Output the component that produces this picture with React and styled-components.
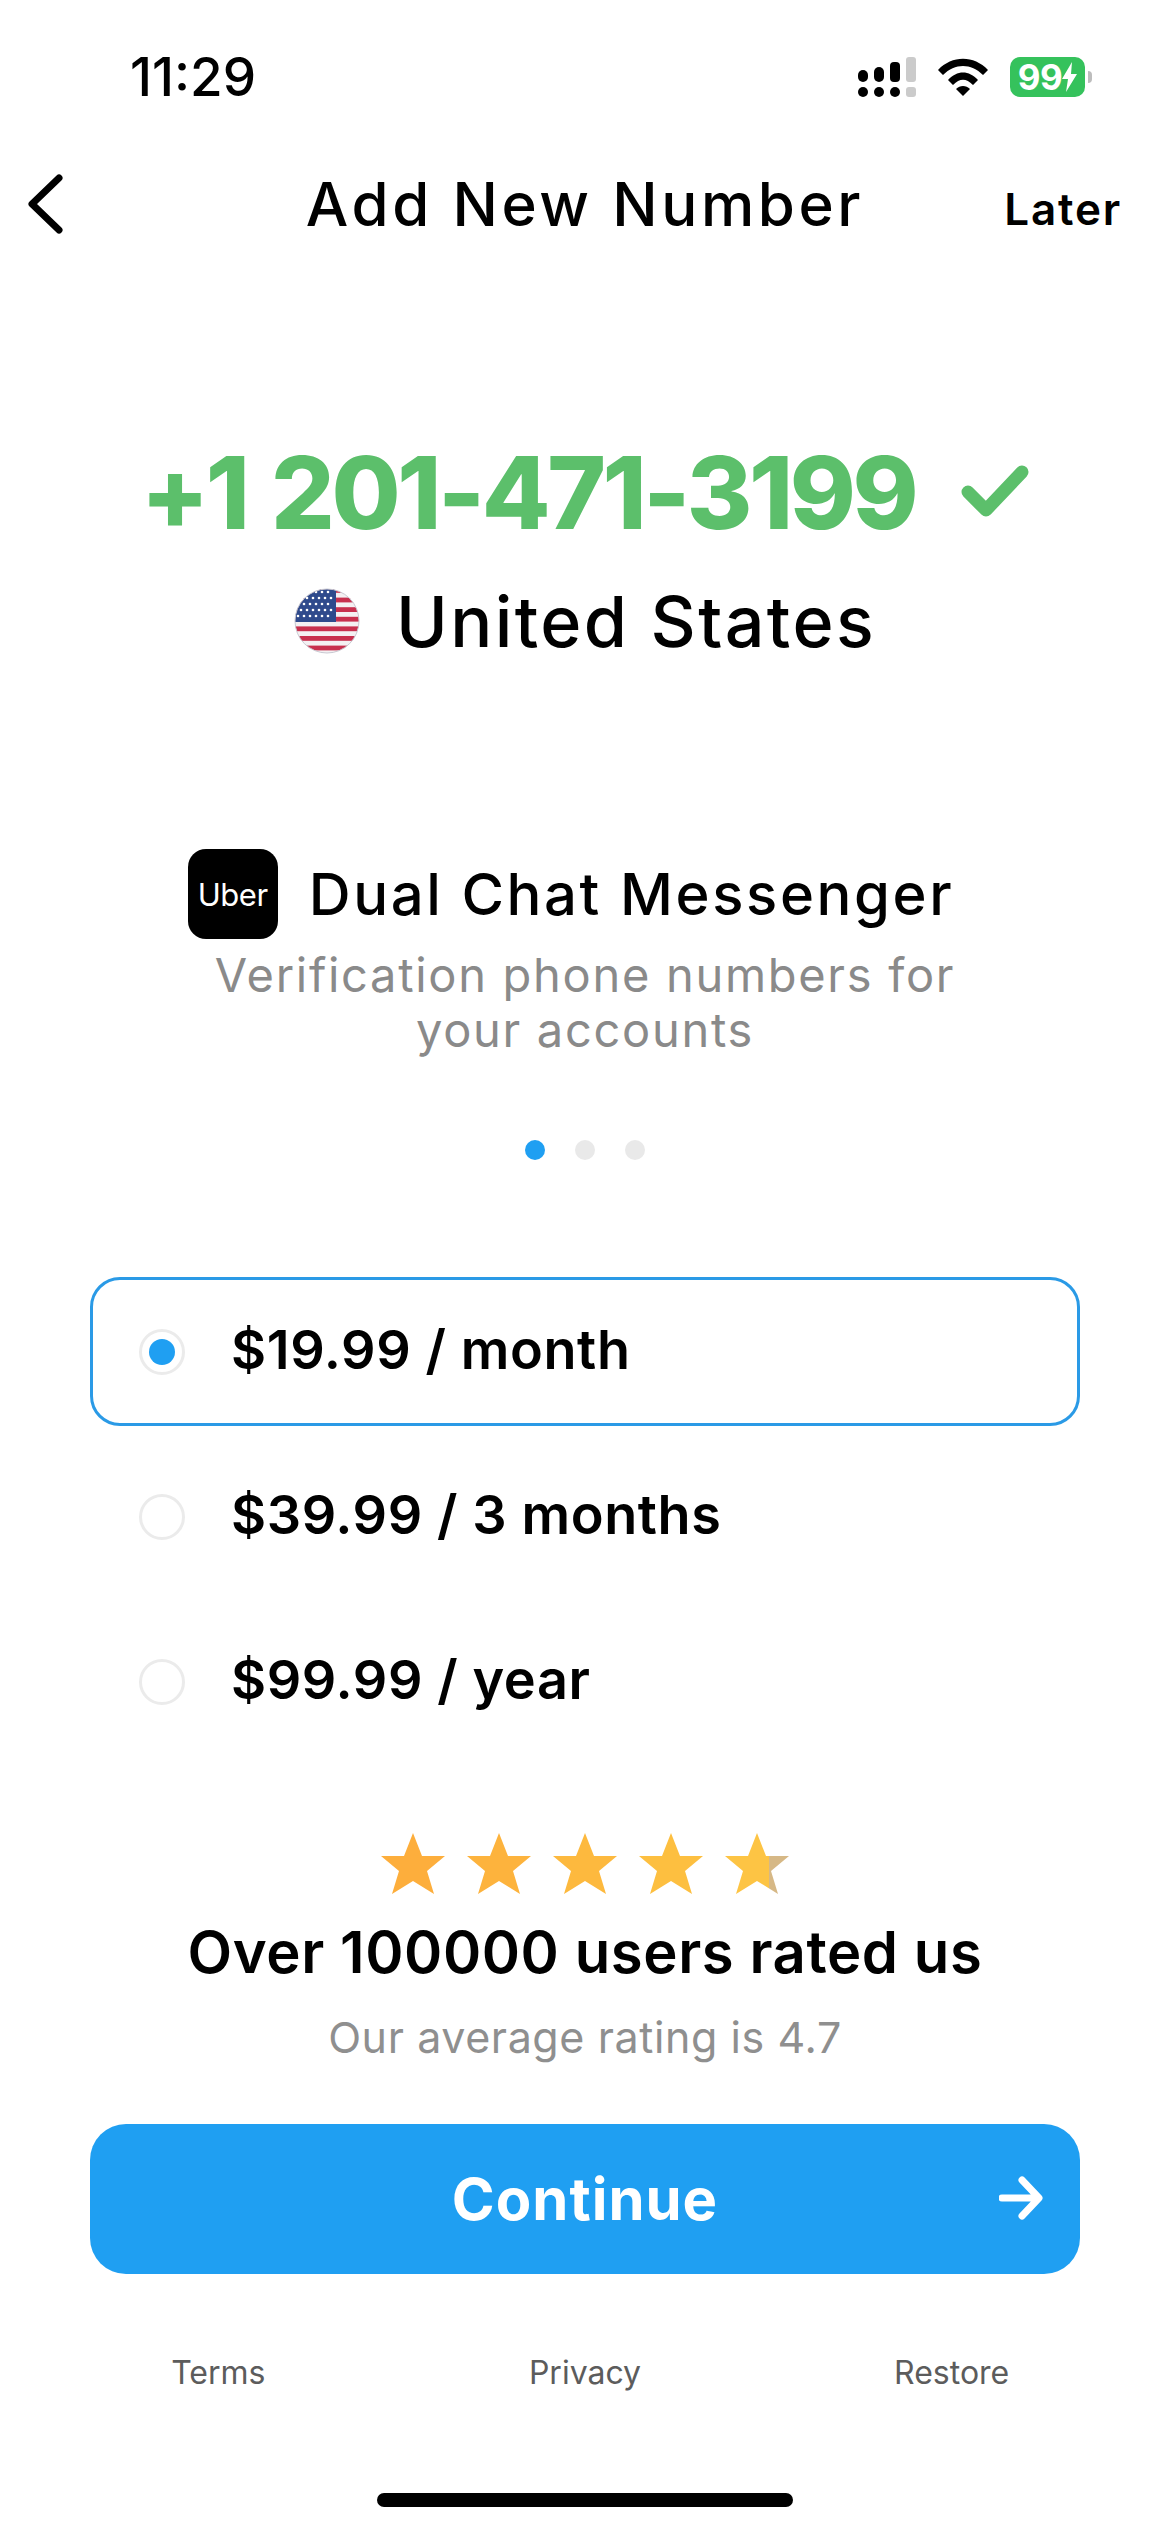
import React from 'react';
import styled, { createGlobalStyle } from 'styled-components';

const GlobalStyle = createGlobalStyle`
  html, body { margin: 0; padding: 0; background: #fff; }
  * { box-sizing: border-box; }
`;

const FONT = `Inter, "Open Sans", "Liberation Sans", sans-serif`;

const plans = [
  { id: 'month', label: '$19.99 / month', active: true },
  { id: 'quarter', label: '$39.99 / 3 months' },
  { id: 'year', label: '$99.99 / year' },
];

const Page = styled.div`
  width: 1170px;
  height: 2532px;
  overflow: hidden;
  display: flex;
  flex-direction: column;
  background: #fff;
  color: #000;
  font-family: ${FONT};
`;

const StatusBar = styled.div`
  height: 154px;
  padding: 0 85px 0 130px;
  display: flex;
  align-items: center;
  justify-content: space-between;
`;

const Time = styled.div`
  font-size: 53px;
  font-weight: 500;
`;

const StatusIcons = styled.div`
  display: flex;
  align-items: center;
  gap: 22px;
`;

const Battery = styled.div`
  width: 75px;
  height: 40px;
  border-radius: 10px;
  background: #35c25c;
  color: #fff;
  display: flex;
  align-items: center;
  justify-content: center;
  font-size: 35px;
  font-weight: 700;
  letter-spacing: -0.5px;
  position: relative;
  &:after {
    content: '';
    position: absolute;
    right: -7px;
    top: 14px;
    width: 4px;
    height: 12px;
    border-radius: 0 4px 4px 0;
    background: #bdbdbd;
  }
`;

const Nav = styled.div`
  height: 100px;
  padding: 0 48px 0 27px;
  display: grid;
  grid-template-columns: 141px 1fr 120px;
  align-items: center;
`;

const Title = styled.div`
  font-size: 60px;
  font-weight: 500;
  text-align: center;
  letter-spacing: 3.6px;
`;

const Later = styled.div`
  font-size: 44px;
  font-weight: 600;
  text-align: right;
  letter-spacing: 1.8px;
  padding-top: 10px;
  white-space: nowrap;
`;

const PhoneRow = styled.div`
  margin-top: 188px;
  height: 100px;
  display: flex;
  align-items: center;
  justify-content: center;
  gap: 46px;
  color: #5cbf6b;
`;

const Phone = styled.div`
  font-size: 100px;
  font-weight: 800;
  letter-spacing: -3.4px;
  word-spacing: 6px;
`;

const CountryRow = styled.div`
  margin-top: 39px;
  height: 80px;
  display: flex;
  align-items: center;
  justify-content: center;
  gap: 36px;
  font-size: 70px;
  font-weight: 500;
  letter-spacing: 2.4px;
`;

const PromoRow = styled.div`
  margin-top: 188px;
  height: 90px;
  padding-right: 28px;
  display: flex;
  align-items: center;
  justify-content: center;
  gap: 31px;
  font-size: 58px;
  font-weight: 500;
  letter-spacing: 2.6px;
`;

const AppIcon = styled.div`
  width: 90px;
  height: 90px;
  border-radius: 18px;
  background: #000;
  color: #fff;
  display: flex;
  align-items: center;
  justify-content: center;
  font-size: 31px;
  font-weight: 400;
  letter-spacing: -0.5px;
`;

const Subtitle = styled.div`
  margin-top: 8px;
  font-size: 47px;
  line-height: 55px;
  font-weight: 400;
  color: #8a8a8a;
  text-align: center;
  letter-spacing: 1.7px;
`;

const Dots = styled.div`
  margin-top: 83px;
  display: flex;
  justify-content: center;
  gap: 30px;
`;

const Dot = styled.div`
  width: 20px;
  height: 20px;
  border-radius: 50%;
  background: ${props => (props.$active ? '#1f9ff2' : '#e9e9e9')};
`;

const Plans = styled.div`
  margin: 117px 90px 0;
  display: flex;
  flex-direction: column;
  gap: 16px;
`;

const Plan = styled.div`
  height: 149px;
  padding-left: 46px;
  display: flex;
  align-items: center;
  gap: 46px;
  border-radius: 30px;
  border: 3px solid ${props => (props.$active ? '#2a9ae6' : 'transparent')};
  font-size: 54px;
  font-weight: 600;
  letter-spacing: 0.6px;
`;

const PlanLabel = styled.span`
  padding-bottom: 4px;
`;

const Radio = styled.div`
  width: 46px;
  height: 46px;
  border-radius: 50%;
  border: 3px solid #ebebeb;
  display: flex;
  align-items: center;
  justify-content: center;
  &:after {
    content: '';
    width: 26px;
    height: 26px;
    border-radius: 50%;
    background: ${props => (props.$active ? '#1f9ff2' : 'transparent')};
  }
`;

const Stars = styled.div`
  margin-top: 76px;
  height: 64px;
  display: flex;
  justify-content: center;
  gap: 22px;
`;

const RatingTitle = styled.div`
  margin-top: 21px;
  height: 70px;
  line-height: 70px;
  text-align: center;
  font-size: 58px;
  font-weight: 600;
  letter-spacing: 0.6px;
`;

const RatingNote = styled.div`
  margin-top: 25px;
  height: 50px;
  line-height: 50px;
  text-align: center;
  font-size: 43px;
  color: #8f8f8f;
  letter-spacing: 0.6px;
`;

const ContinueButton = styled.div`
  margin: 62px 90px 0;
  height: 150px;
  border-radius: 36px;
  background: #1f9ff2;
  color: #fff;
  font-size: 58px;
  font-weight: 700;
  letter-spacing: 1px;
  display: flex;
  align-items: center;
  justify-content: center;
  position: relative;
  svg {
    position: absolute;
    right: 37px;
    top: 52px;
  }
`;

const Footer = styled.div`
  margin-top: 73px;
  height: 50px;
  padding: 0 35px;
  display: grid;
  grid-template-columns: repeat(3, 1fr);
  align-items: center;
  text-align: center;
  font-size: 32px;
  color: #5c5c5c;
`;

const HomeBar = styled.div`
  margin: 96px auto 0;
  width: 416px;
  height: 14px;
  border-radius: 7px;
  background: #000;
`;

const Signal = () => (
  <svg width="58" height="40" viewBox="0 0 58 40">
    <rect x="0" y="13" width="10" height="12" rx="5" />
    <rect x="16" y="10" width="10" height="15" rx="5" />
    <rect x="32" y="5" width="10" height="20" rx="4" />
    <rect x="48" y="0" width="10" height="25" rx="3" fill="#cbcbcb" />
    <rect x="0" y="30" width="10" height="10" rx="5" />
    <rect x="16" y="30" width="10" height="10" rx="5" />
    <rect x="32" y="30" width="10" height="10" rx="5" />
    <rect x="48" y="30" width="10" height="10" rx="3" fill="#cbcbcb" />
  </svg>
);

const Wifi = () => (
  <svg width="50" height="38" viewBox="0 0 50 38">
    <path d="M0 12 C14 -3 36 -3 50 12 L45 17 C33 5 17 5 5 17 Z" />
    <path d="M10 22 C19 12 31 12 40 22 L35 27 C28 20 22 20 15 27 Z" />
    <path d="M25 38 L18 31 C22 27 28 27 32 31 Z" />
  </svg>
);

const Bolt = () => (
  <svg width="15" height="30" viewBox="0 0 15 30">
    <path d="M10 0 L0 17 H6 L4 30 L15 12 H9 Z" fill="#fff" />
  </svg>
);

const Chevron = () => (
  <svg width="36" height="60" viewBox="0 0 36 60">
    <path d="M32 4 L5 30 L32 56" fill="none" stroke="#000" strokeWidth="7" strokeLinecap="round" strokeLinejoin="round" />
  </svg>
);

const Check = () => (
  <svg width="68" height="56" viewBox="0 0 68 56">
    <path d="M7 28 L25 46 L61 8" fill="none" stroke="#5cbf6b" strokeWidth="13" strokeLinecap="round" strokeLinejoin="round" />
  </svg>
);

const Flag = () => {
  const stripes = [];
  for (let i = 0; i < 7; i++) stripes.push(<rect key={i} x="0" y={i * 9.6} width="66" height="4.8" fill="#c8304e" />);
  const stars = [];
  for (let r = 0; r < 5; r++)
    for (let c = 0; c < 6; c++)
      stars.push(<circle key={`${r}-${c}`} cx={4 + c * 6 + (r % 2) * 3} cy={4 + r * 6} r="1.3" fill="#fff" />);
  return (
    <svg width="66" height="66" viewBox="0 0 66 66">
      <defs>
        <clipPath id="flag-round"><circle cx="33" cy="33" r="32" /></clipPath>
      </defs>
      <g clipPath="url(#flag-round)">
        <rect width="66" height="66" fill="#f4f0f2" />
        {stripes}
        <rect x="0" y="0" width="42" height="34" fill="#2f4a8c" />
        {stars}
      </g>
      <circle cx="33" cy="33" r="32" fill="none" stroke="#c9c9d2" strokeWidth="1" />
    </svg>
  );
};

const STAR_PATH = 'M32 1 L41 24 L64 24 L46 39 L53 62 L32 49 L11 62 L18 39 L0 24 L23 24 Z';

const Star = ({ color, part }) => (
  <svg width="64" height="64" viewBox="0 0 64 64">
    {part && (
      <defs>
        <linearGradient id="star-part">
          <stop offset="68%" stopColor={color} />
          <stop offset="68%" stopColor="#d6b886" />
        </linearGradient>
      </defs>
    )}
    <path d={STAR_PATH} fill={part ? 'url(#star-part)' : color} />
  </svg>
);

const Arrow = () => (
  <svg width="44" height="44" viewBox="0 0 44 44">
    <path d="M3 22 H39 M23 4 L40 22 L23 40" fill="none" stroke="#fff" strokeWidth="7" strokeLinecap="round" strokeLinejoin="round" />
  </svg>
);

const starColors = ['#fdae3c', '#fdb33d', '#fdb93e', '#fdbf40', '#fdc444'];

export default function App() {
  return (
    <Page>
      <GlobalStyle />
      <StatusBar>
        <Time>11:29</Time>
        <StatusIcons>
          <Signal />
          <Wifi />
          <Battery>99<Bolt /></Battery>
        </StatusIcons>
      </StatusBar>
      <Nav>
        <Chevron />
        <Title>Add New Number</Title>
        <Later>Later</Later>
      </Nav>
      <PhoneRow>
        <Phone>+1 201-471-3199</Phone>
        <Check />
      </PhoneRow>
      <CountryRow>
        <Flag />
        United States
      </CountryRow>
      <PromoRow>
        <AppIcon>Uber</AppIcon>
        Dual Chat Messenger
      </PromoRow>
      <Subtitle>
        Verification phone numbers for
        <br />
        your accounts
      </Subtitle>
      <Dots>
        <Dot $active />
        <Dot />
        <Dot />
      </Dots>
      <Plans>
        {plans.map(plan => (
          <Plan key={plan.id} $active={plan.active}>
            <Radio $active={plan.active} />
            <PlanLabel>{plan.label}</PlanLabel>
          </Plan>
        ))}
      </Plans>
      <Stars>
        {starColors.map((color, i) => (
          <Star key={color} color={color} part={i === 4} />
        ))}
      </Stars>
      <RatingTitle>Over 100000 users rated us</RatingTitle>
      <RatingNote>Our average rating is 4.7</RatingNote>
      <ContinueButton>
        Continue
        <Arrow />
      </ContinueButton>
      <Footer>
        <div>Terms</div>
        <div>Privacy</div>
        <div>Restore</div>
      </Footer>
      <HomeBar />
    </Page>
  );
}
